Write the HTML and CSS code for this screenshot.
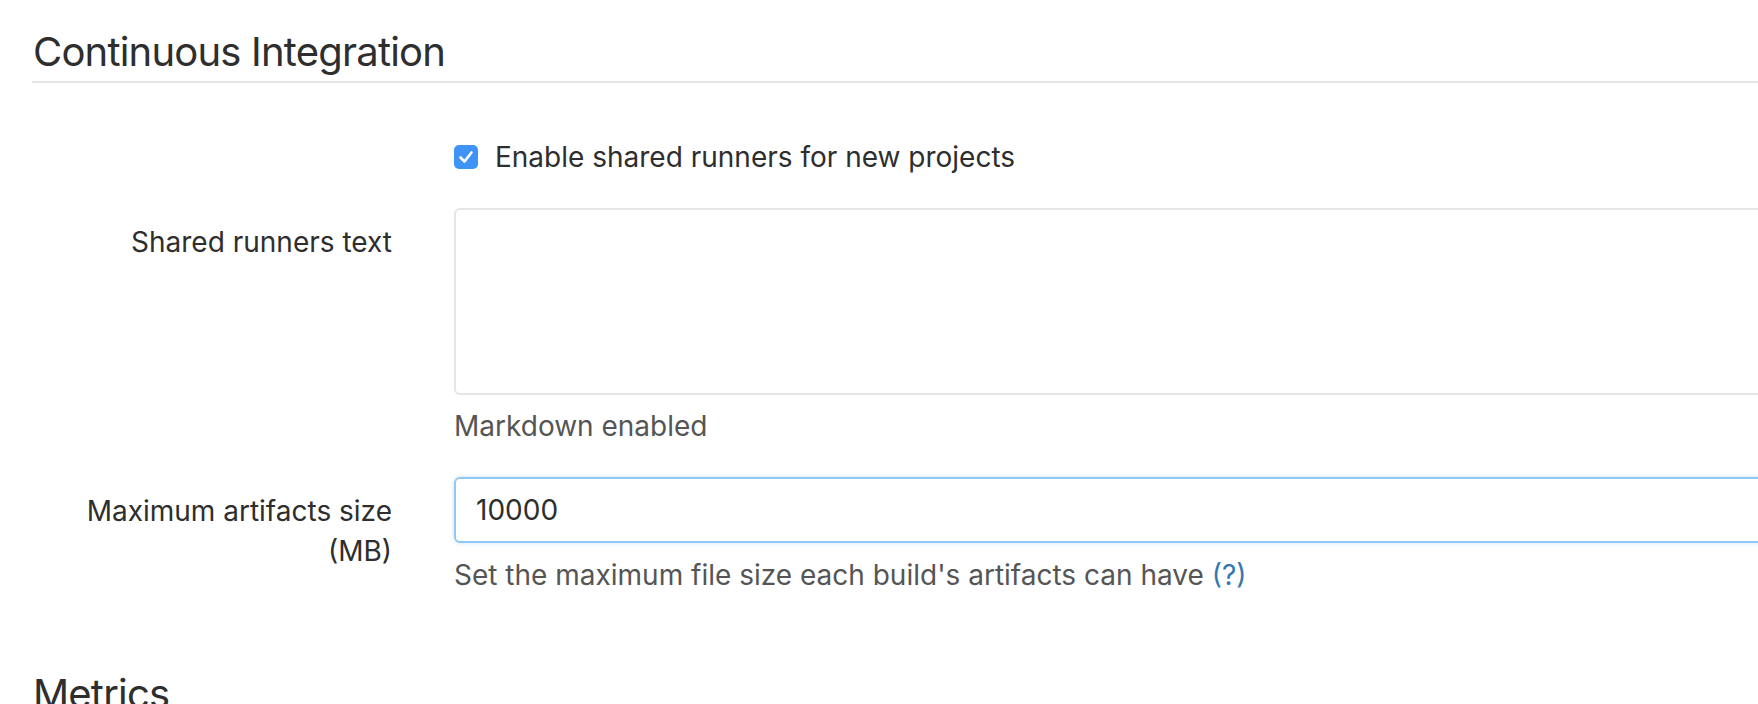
FILE: index.html
```html
<!DOCTYPE html>
<html>
<head>
<meta charset="utf-8">
<link rel="stylesheet" href="styles.css">
</head>
<body>
<div class="page">
  <form class="form-horizontal">
    <section class="fieldset">
      <h3 class="legend">Continuous Integration</h3>
      <div class="form-group checkbox-row">
        <div class="label-col"></div>
        <div class="control-col">
          <label class="checkbox">
            <span class="check-box">
              <svg width="24" height="24" viewBox="0 0 24 24"><path d="M6.5 12.5 L10.5 16.5 L17.5 7.5" fill="none" stroke="#fff" stroke-width="2.6" stroke-linecap="round" stroke-linejoin="round"/></svg>
            </span>
            <span>Enable shared runners for new projects</span>
          </label>
        </div>
      </div>
      <div class="form-group">
        <label class="label-col control-label">Shared runners text</label>
        <div class="control-col">
          <textarea class="form-control text-area"></textarea>
          <div class="help-block">Markdown enabled</div>
        </div>
      </div>
      <div class="form-group">
        <label class="label-col control-label">Maximum artifacts size (MB)</label>
        <div class="control-col">
          <input class="form-control input focused" type="text" value="10000">
          <div class="help-block help-gap">Set the maximum file size each build's artifacts can have <a href="#">(?)</a></div>
        </div>
      </div>
    </section>
    <section class="fieldset">
      <h3 class="legend next-legend">Metrics</h3>
    </section>
  </form>
</div>
</body>
</html>
```
FILE: styles.css
```css
html, body {
  margin: 0;
  padding: 0;
  background: #fff;
  overflow: hidden;
}
body {
  font-family: Inter, "Liberation Sans", sans-serif;
  font-size: 28px;
  line-height: 40px;
  color: #2e2e2e;
}
.page {
  width: 1900px;
  padding: 30px 0 0 32px;
}
form {
  margin: 0;
}
.legend {
  display: block;
  padding: 0 0 7px 1px;
  margin: 0;
  font-size: 40px;
  font-weight: 400;
  line-height: 44px;
  letter-spacing: -0.8px;
  color: #2e2e2e;
  border-bottom: 2px solid #e5e5e5;
}
.next-legend {
  margin-top: 77px;
  border-bottom: 0;
}
.form-group {
  display: grid;
  grid-template-columns: 360px 1fr;
  column-gap: 62px;
}
.checkbox-row {
  margin-top: 54px;
}
.form-group + .form-group {
  margin-top: 31px;
}
.control-label {
  text-align: right;
  padding-top: 14px;
}
.checkbox {
  display: flex;
  align-items: center;
  gap: 17px;
}
.check-box {
  width: 24px;
  height: 24px;
  border-radius: 5px;
  background: #3d93f6;
  display: flex;
  flex-shrink: 0;
}
.form-control {
  display: block;
  box-sizing: border-box;
  width: 100%;
  font-family: inherit;
  font-size: 28px;
  color: #2e2e2e;
  background: #fff;
  border: 2px solid #e5e5e5;
  border-radius: 6px;
  outline: none;
  margin: 0;
}
.text-area {
  height: 187px;
  resize: none;
  padding: 12px 20px;
}
.input {
  height: 66px;
  line-height: 62px;
  padding: 0 20px;
}
.focused {
  border-color: #92c9f4;
  box-shadow: 0 0 4px rgba(146, 201, 244, 0.5);
}
.help-block {
  margin-top: 11px;
  color: #555;
}
.help-gap {
  margin-top: 12px;
}
.help-block a {
  color: #3777b0;
  text-decoration: none;
}
```
